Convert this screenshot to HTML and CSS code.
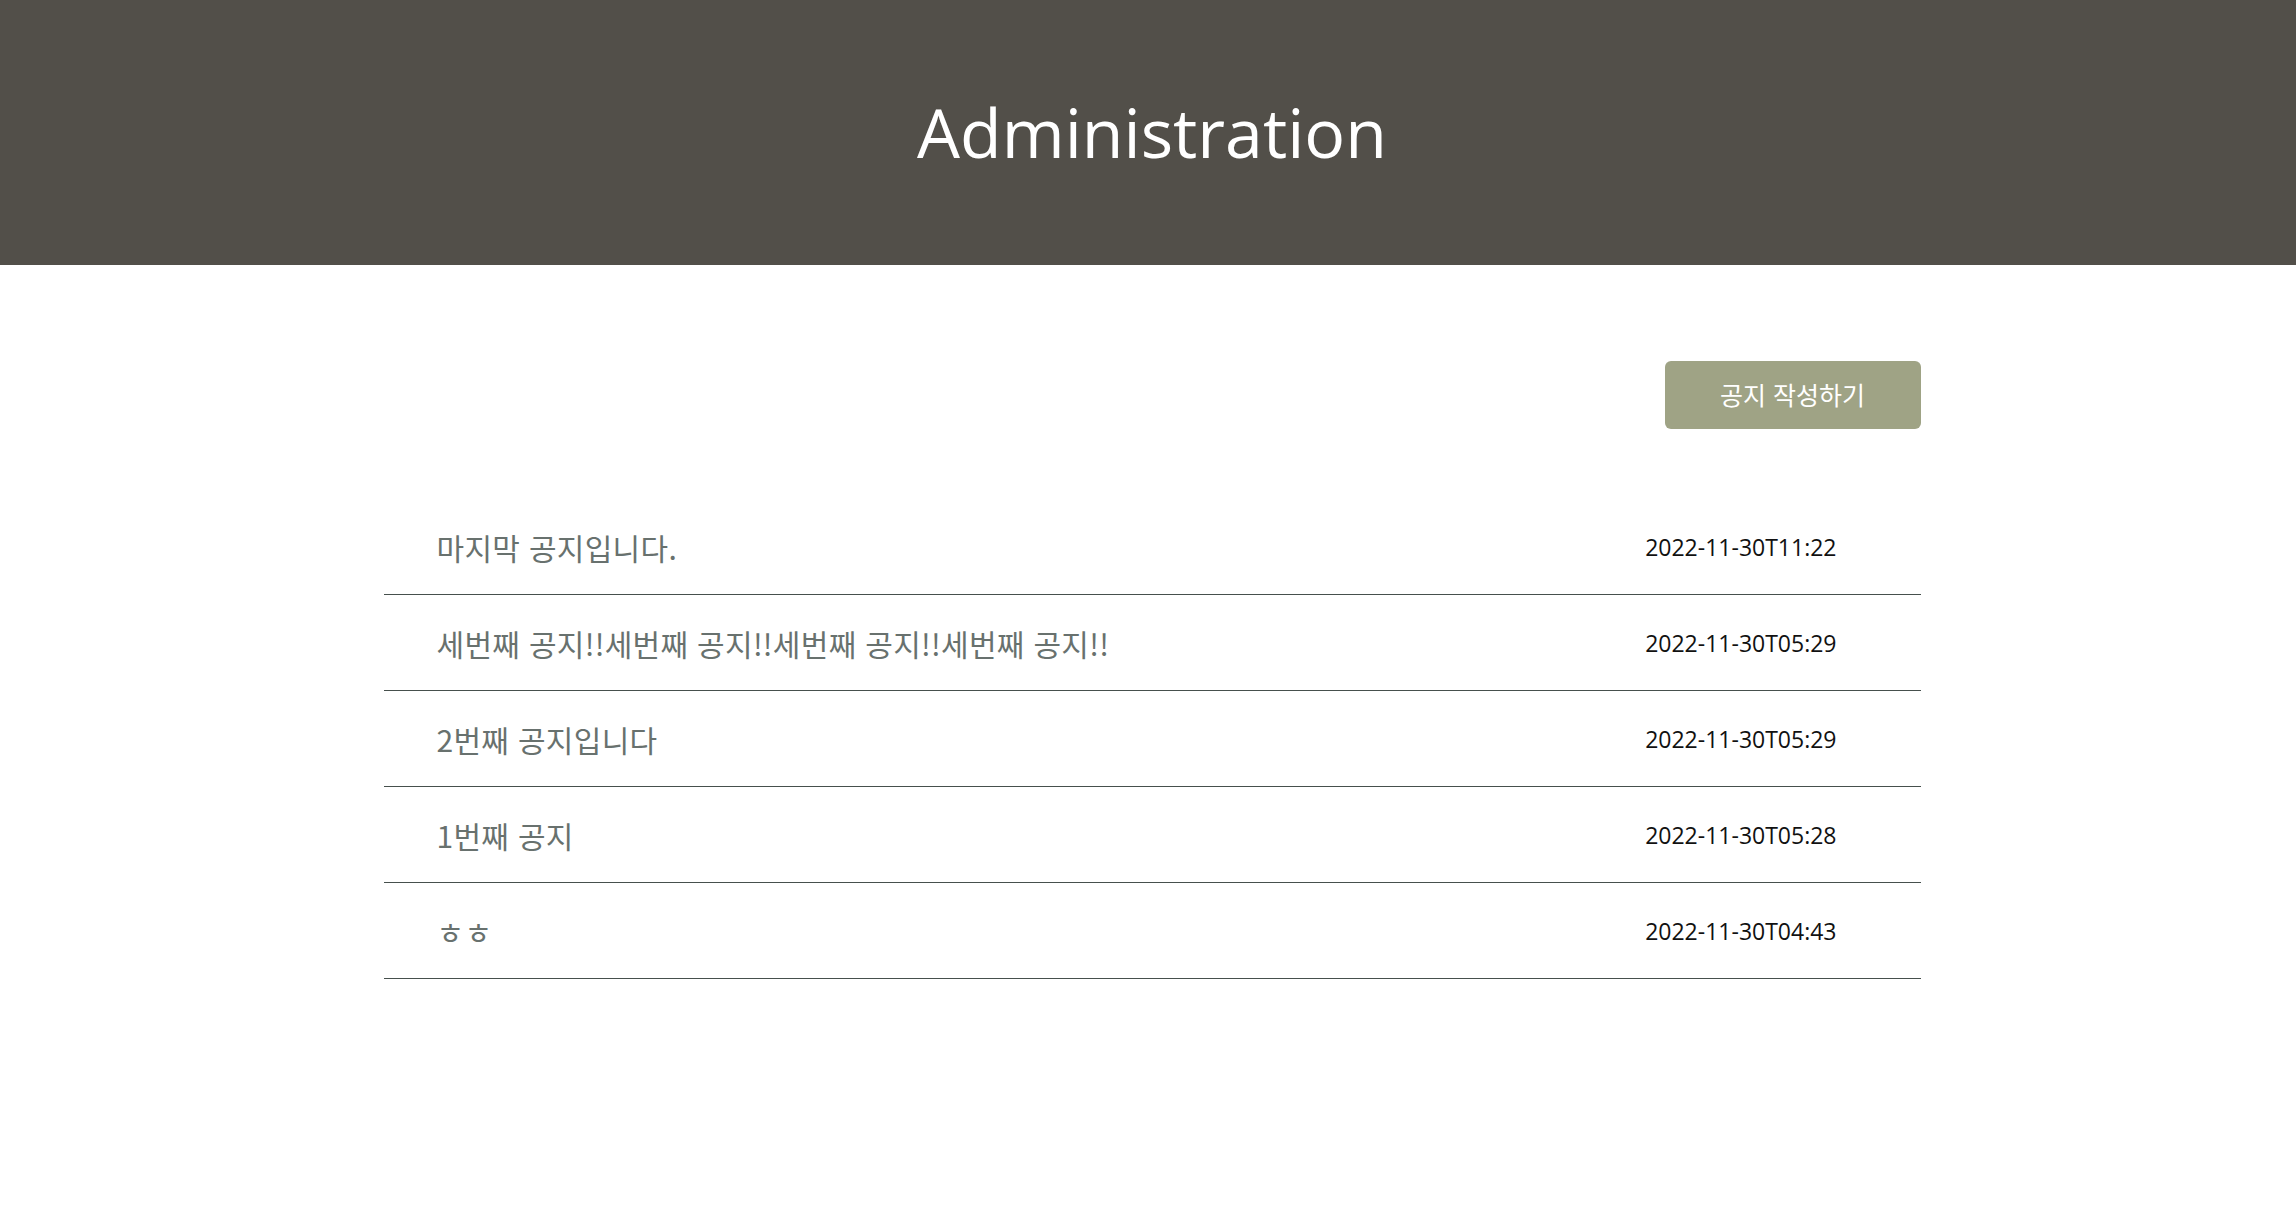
FILE: index.html
```html
<!DOCTYPE html>
<html lang="ko">
<head>
<meta charset="utf-8">
<title>Administration</title>
<link rel="stylesheet" href="styles.css">
</head>
<body>
<header class="hero">
  <h1 class="hero-title">Administration</h1>
</header>
<main class="content">
  <div class="toolbar">
    <button class="write-btn">공지 작성하기</button>
  </div>
  <ul class="notice-list">
    <li class="notice-row"><span class="notice-title">마지막 공지입니다.</span><span class="notice-date">2022-11-30T11:22</span></li>
    <li class="notice-row"><span class="notice-title">세번째 공지!!세번째 공지!!세번째 공지!!세번째 공지!!</span><span class="notice-date">2022-11-30T05:29</span></li>
    <li class="notice-row"><span class="notice-title">2번째 공지입니다</span><span class="notice-date">2022-11-30T05:29</span></li>
    <li class="notice-row"><span class="notice-title">1번째 공지</span><span class="notice-date">2022-11-30T05:28</span></li>
    <li class="notice-row"><span class="notice-title">ㅎㅎ</span><span class="notice-date">2022-11-30T04:43</span></li>
  </ul>
</main>
</body>
</html>
```

FILE: styles.css
```css
* { box-sizing: border-box; }
html, body { margin: 0; padding: 0; background: #ffffff; }
body {
  font-family: "Open Sans", "Noto Sans CJK KR", sans-serif;
}
.hero {
  background: #524f49;
  height: 265px;
  padding-left: 8px;
  display: flex;
  justify-content: center;
}
.hero-title {
  margin: 0;
  padding-top: 83px;
  color: #ffffff;
  font-family: "Open Sans", sans-serif;
  font-weight: 400;
  font-size: 68px;
  line-height: 98px;
  height: 98px;
}
.content {
  width: 1537px;
  margin: 0 auto;
  padding-left: 0;
  position: relative;
  left: 4px;
}
.toolbar {
  display: flex;
  justify-content: flex-end;
  padding-top: 96px;
}
.write-btn {
  width: 256px;
  height: 68px;
  border: none;
  border-radius: 6px;
  background: #9fa385;
  color: #ffffff;
  font-family: "Noto Sans CJK KR", sans-serif;
  font-size: 25px;
  padding: 0 0 2px;
  cursor: pointer;
}
.notice-list {
  list-style: none;
  margin: 70px 0 0;
  padding: 0;
}
.notice-row {
  display: flex;
  align-items: center;
  justify-content: space-between;
  height: 96px;
  border-bottom: 1px solid #46504d;
  padding: 0 84px 0 53px;
}
.notice-title {
  font-family: "Noto Sans CJK KR", sans-serif;
  font-size: 30px;
  letter-spacing: 0.3px;
  color: #68716e;
  font-weight: 400;
}
.notice-date {
  font-family: "Open Sans", sans-serif;
  font-size: 23px;
  color: #111111;
}
```
